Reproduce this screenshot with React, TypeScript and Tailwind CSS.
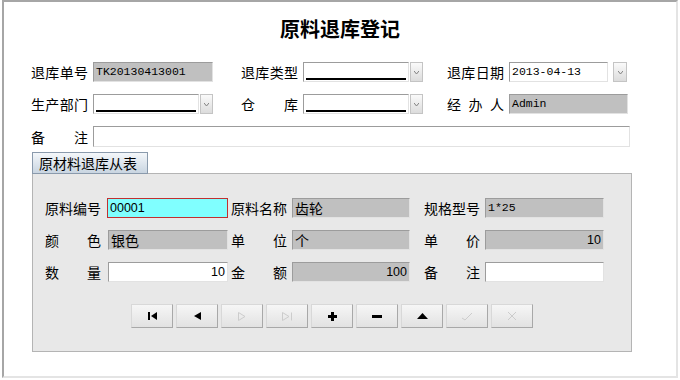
import React from "react";

const CJK = { fontFamily: '"Noto Sans CJK SC", "Noto Sans", sans-serif' };
const CJK14 = { fontFamily: '"Noto Sans CJK SC", "Noto Sans", sans-serif', fontSize: 14 };
const MONO = { fontFamily: '"Liberation Mono", "Noto Sans CJK SC", monospace', fontSize: 11.5 };
const SANS = { fontFamily: '"Liberation Sans", "Noto Sans CJK SC", sans-serif' };

function Label({ text, w = 57 }: { text: string; w?: number }) {
  const chars = [...text.replace(/ /g, "")];
  return (
    <div
      className="flex justify-between text-[14px] leading-[20px] text-black shrink-0"
      style={{ ...CJK, width: w }}
    >
      {chars.map((c, i) => (
        <span key={i}>{c}</span>
      ))}
    </div>
  );
}

function Field({
  w,
  bg = "bg-white",
  text = "",
  right = false,
  font = MONO,
  extra = "",
  ml = 0,
}: {
  w: number;
  bg?: string;
  text?: string;
  right?: boolean;
  font?: React.CSSProperties;
  extra?: string;
  ml?: number;
}) {
  return (
    <div
      className={`h-[20px] shrink-0 border border-t-[#9c9c9c] border-l-[#9c9c9c] border-r-[#e2e2e2] border-b-[#e2e2e2] px-[2px] flex items-center text-[12.5px] text-black overflow-hidden whitespace-nowrap ${bg} ${right ? "justify-end" : ""} ${extra}`}
      style={{ fontSize: 12.5, ...font, width: w, marginLeft: ml }}
    >
      {text}
    </div>
  );
}

function Select({ w, ml }: { w: number; ml: number }) {
  return (
    <div
      className="h-[20px] shrink-0 border border-t-[#9c9c9c] border-l-[#9c9c9c] border-r-[#e2e2e2] border-b-[#e2e2e2] bg-white flex flex-col justify-end px-[2px] pb-[1px]"
      style={{ width: w, marginLeft: ml }}
    >
      <div className="h-[2px] bg-black w-full" />
    </div>
  );
}

function DropBtn({ ml, w = 13 }: { ml: number; w?: number }) {
  return (
    <div
      className="h-[20px] shrink-0 border border-[#c4c4c4] bg-gradient-to-b from-[#fafafa] to-[#dcdcdc] flex items-center justify-center"
      style={{ width: w, marginLeft: ml }}
    >
      <svg width="5" height="3" viewBox="0 0 5 3">
        <path d="M0 0 L2.5 3 L5 0" fill="none" stroke="#808080" strokeWidth="1" />
      </svg>
    </div>
  );
}

function NavBtn({ children }: { children: React.ReactNode }) {
  return (
    <div className="w-[42px] h-[24px] border border-t-[#d8d8d8] border-l-[#d8d8d8] border-r-[#a8a8a8] border-b-[#a8a8a8] bg-gradient-to-b from-[#f6f6f6] to-[#e2e2e2] flex items-center justify-center">
      {children}
    </div>
  );
}

export default function App() {
  const dis = "#cccccc";
  return (
    <div className="w-[680px] h-[380px] bg-white overflow-hidden" style={CJK}>
      <div className="ml-[2px] w-[676px] h-[378px] border-l-2 border-t-2 border-l-[#a6a6a6] border-t-[#a6a6a6] border-r-2 border-b-2 border-r-[#e4e4e4] border-b-[#e4e4e4] bg-white flex flex-col">
        <div className="mt-[14px] h-[26px] text-center text-[20px] leading-[26px] font-bold text-black">
          原料退库登记
        </div>

        {/* Row 1 */}
        <div className="mt-[20px] flex items-center pl-[27px] h-[20px]">
          <Label text="退库单号" />
          <Field w={120} ml={5} bg="bg-[#c0c0c0]" text="TK20130413001" />
          <div className="ml-[28px]">
            <Label text="退库类型" />
          </div>
          <Select w={106} ml={5} />
          <DropBtn ml={1} />
          <div className="ml-[24px]">
            <Label text="退库日期" />
          </div>
          <Field w={99} ml={5} text="2013-04-13" />
          <DropBtn ml={5} w={14} />
        </div>

        {/* Row 2 */}
        <div className="mt-[12px] flex items-center pl-[27px] h-[20px]">
          <Label text="生产部门" />
          <Select w={106} ml={5} />
          <DropBtn ml={1} />
          <div className="ml-[28px]">
            <Label text="仓库" />
          </div>
          <Select w={106} ml={5} />
          <DropBtn ml={1} />
          <div className="ml-[24px]">
            <Label text="经办人" />
          </div>
          <Field w={119} ml={5} bg="bg-[#c0c0c0]" text="Admin" />
        </div>

        {/* Row 3 */}
        <div className="mt-[12px] flex items-center pl-[27px] h-[21px]">
          <Label text="备注" />
          <div className="ml-[5px] w-[537px] h-[21px] border border-t-[#9c9c9c] border-l-[#9c9c9c] border-r-[#e2e2e2] border-b-[#e2e2e2] bg-white" />
        </div>

        {/* Tab */}
        <div className="mt-[5px] ml-[28px] w-[116px] h-[22px] border border-[#8a9aac] bg-gradient-to-b from-[#f4f7fa] to-[#c9d5e1] text-[14px] leading-[20px] pl-[6px] text-black relative z-10">
          原材料退库从表
        </div>

        {/* Panel */}
        <div className="-mt-px ml-[28px] w-[600px] h-[179px] border border-[#b4b4b4] bg-[#e8e8e8] pt-[24px] pl-[12px] flex flex-col">
          <div className="flex items-center h-[20px]">
            <Label text="原料编号" w={56} />
            <Field
              w={121}
              ml={6}
              bg="bg-[#80ffff]"
              text="00001"
              font={SANS}
              extra="!border-[#c03030]"
            />
            <div className="ml-[3px]">
              <Label text="原料名称" w={56} />
            </div>
            <Field w={118} ml={5} bg="bg-[#c0c0c0]" text="齿轮" font={CJK14} />
            <div className="ml-[14px]">
              <Label text="规格型号" w={56} />
            </div>
            <Field w={119} ml={5} bg="bg-[#c0c0c0]" text="1*25" />
          </div>

          <div className="mt-[12px] flex items-center h-[20px]">
            <Label text="颜色" w={56} />
            <Field w={120} ml={7} bg="bg-[#c0c0c0]" text="银色" font={CJK14} />
            <div className="ml-[3px]">
              <Label text="单位" w={56} />
            </div>
            <Field w={118} ml={5} bg="bg-[#c0c0c0]" text="个" font={CJK14} />
            <div className="ml-[14px]">
              <Label text="单价" w={56} />
            </div>
            <Field w={119} ml={5} bg="bg-[#c0c0c0]" text="10" right font={SANS} />
          </div>

          <div className="mt-[12px] flex items-center h-[20px]">
            <Label text="数量" w={56} />
            <Field w={120} ml={7} text="10" right font={SANS} />
            <div className="ml-[3px]">
              <Label text="金额" w={56} />
            </div>
            <Field w={118} ml={5} bg="bg-[#c0c0c0]" text="100" right font={SANS} />
            <div className="ml-[14px]">
              <Label text="备注" w={56} />
            </div>
            <Field w={119} ml={5} />
          </div>

          <div className="mt-[22px] -ml-[12px] flex justify-center gap-[3px]">
            <NavBtn>
              <svg width="9" height="8" viewBox="0 0 9 8">
                <rect x="0" y="0" width="2" height="8" fill="#000" />
                <path d="M9 0 L3 4 L9 8 Z" fill="#000" />
              </svg>
            </NavBtn>
            <NavBtn>
              <svg width="7" height="8" viewBox="0 0 7 8">
                <path d="M7 0 L0 4 L7 8 Z" fill="#000" />
              </svg>
            </NavBtn>
            <NavBtn>
              <svg width="8" height="9" viewBox="0 0 8 9">
                <path d="M0.5 0.5 L7 4.5 L0.5 8.5 Z" fill="none" stroke={dis} strokeWidth="1" />
              </svg>
            </NavBtn>
            <NavBtn>
              <svg width="11" height="9" viewBox="0 0 11 9">
                <path d="M0.5 0.5 L7 4.5 L0.5 8.5 Z" fill="none" stroke={dis} strokeWidth="1" />
                <path d="M9.5 0.5 L9.5 8.5" stroke={dis} strokeWidth="1" />
              </svg>
            </NavBtn>
            <NavBtn>
              <svg width="9" height="9" viewBox="0 0 9 9">
                <rect x="3" y="0" width="3" height="9" fill="#000" />
                <rect x="0" y="3" width="9" height="3" fill="#000" />
              </svg>
            </NavBtn>
            <NavBtn>
              <svg width="10" height="3" viewBox="0 0 10 3">
                <rect x="0" y="0" width="10" height="3" fill="#000" />
              </svg>
            </NavBtn>
            <NavBtn>
              <svg width="11" height="6" viewBox="0 0 11 6">
                <path d="M0 6 L5.5 0 L11 6 Z" fill="#000" />
              </svg>
            </NavBtn>
            <NavBtn>
              <svg width="12" height="9" viewBox="0 0 12 9">
                <path d="M1 6 L4 8 L11 1" fill="none" stroke={dis} strokeWidth="1" />
              </svg>
            </NavBtn>
            <NavBtn>
              <svg width="10" height="10" viewBox="0 0 10 10">
                <path d="M1 1 L9 9 M9 1 L1 9" fill="none" stroke={dis} strokeWidth="1" />
              </svg>
            </NavBtn>
          </div>
        </div>
      </div>
    </div>
  );
}
